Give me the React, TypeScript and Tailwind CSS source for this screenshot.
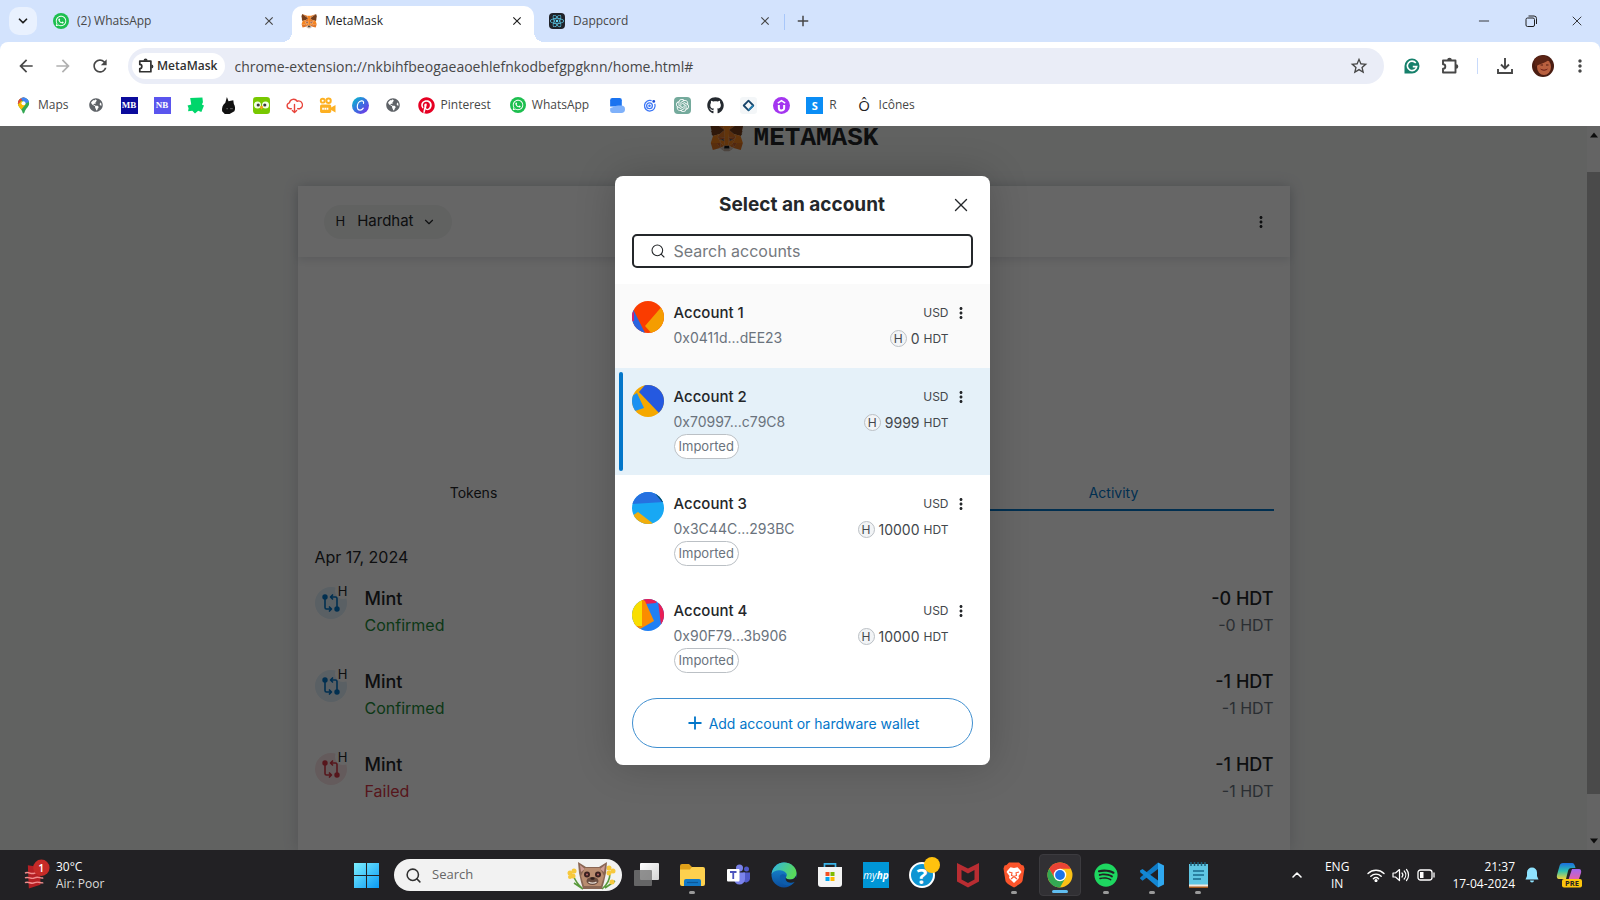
import React from "react";
import { FaGithub, FaGlobeAmericas, FaPinterest, FaReact, FaSpotify, FaWhatsapp } from "react-icons/fa";
import { SiOpenai } from "react-icons/si";
import {
  MdArrowBack,
  MdArrowForward,
  MdRefresh,
  MdStarBorder,
  MdMoreVert,
  MdClose,
  MdAdd,
} from "react-icons/md";
import { Search, X, ChevronDown, ChevronUp, Plus, Minus } from "lucide-react";

const EUCLID = "font-[Inter,'Liberation_Sans',sans-serif]";

/* ---------- drawings ---------- */

function Fox({ className }: { className: string }) {
  return (
    <svg viewBox="0 0 35 33" className={className} aria-hidden="true">
      <path fill="#E17726" d="M32.958 1l-13.134 9.718 2.442-5.727L32.958 1z" />
      <path fill="#E27625" d="M2.663 1l13.017 9.809-2.325-5.818L2.663 1zM28.23 23.533l-3.495 5.339 7.483 2.06 2.144-7.282-6.132-.117zM1.273 23.65l2.13 7.282 7.47-2.06-3.481-5.339-6.119.117zM10.47 14.515l-2.079 3.136 7.405.337-.247-7.97-5.079 4.497zM25.151 14.515l-5.157-4.587-.169 8.06 7.406-.337-2.08-3.136zM10.873 28.872l4.482-2.164-3.858-3.006-.624 5.17zM20.266 26.708l4.469 2.164-.611-5.17-3.858 3.006z" />
      <path fill="#D5BFB2" d="M24.735 28.872l-4.469-2.164.364 2.903-.039 1.231 4.144-1.97zM10.873 28.872l4.157 1.97-.026-1.231.351-2.903-4.482 2.164z" />
      <path fill="#CC6228" d="M10.873 28.872l.65-5.339-4.131.117 3.481 5.222zM24.098 23.533l.637 5.339 3.495-5.222-4.132-.117zM27.23 17.651l-7.405.337.688 3.796 1.091-2.293 2.637 1.205 2.989-3.045zM11.393 20.696l2.624-1.205 1.091 2.293.688-3.796-7.405-.337 3.002 3.045z" />
      <path fill="#233447" d="M15.108 21.784l-3.715-1.088 2.624-1.205 1.091 2.293zM20.513 21.784l1.091-2.293 2.637 1.205-3.728 1.088z" />
      <path fill="#E27525" d="M8.391 17.651l3.105 6.051-.104-3.006-3.001-3.045zM24.241 20.696l-.117 3.006 3.106-6.051-2.989 3.045zM15.796 17.988l-.688 3.796.871 4.471.195-5.895-.378-2.372zM19.825 17.988l-.364 2.359.182 5.908.87-4.471-.688-3.796z" />
      <path fill="#F5841F" d="M20.513 21.784l-.87 4.471.624.453 3.858-3.006.117-3.006-3.729 1.088zM11.393 20.696l.104 3.006 3.858 3.006.624-.453-.871-4.471-3.715-1.088z" />
      <path fill="#C0AC9D" d="M20.591 30.842l.039-1.231-.338-.285h-4.962l-.325.285.026 1.231-4.158-1.97 1.455 1.192 2.949 2.034h5.053l2.962-2.034 1.442-1.192-4.143 1.97z" />
      <path fill="#161616" d="M20.266 26.708l-.624-.453h-3.664l-.624.453-.351 2.903.325-.285h4.962l.338.285-.363-2.903z" />
      <path fill="#763E1A" d="M33.517 11.353l1.104-5.365L32.958 1l-12.692 9.37 4.885 4.145 6.898 2.008 1.52-1.775-.663-.48 1.052-.959-.806-.622 1.053-.804-.688-.53zM1 5.988l1.117 5.365-.714.531 1.065.804-.805.622 1.052.959-.663.48 1.52 1.775 6.897-2.008 4.885-4.145L2.663 1 1 5.988z" />
      <path fill="#F5841F" d="M32.049 16.523l-6.898-2.008 2.08 3.136-3.107 6.051 4.106-.052h6.132l-2.313-7.127zM10.47 14.515l-6.898 2.008-2.299 7.127h6.119l4.105.052-3.105-6.051 2.078-3.136zM19.825 17.988l.441-7.618 2-5.379h-8.911l2 5.379.441 7.618.169 2.398.013 5.869h3.664l.013-5.869.17-2.398z" />
    </svg>
  );
}

function WhatsAppMark() {
  return (
    <span className="flex size-4 shrink-0 items-center justify-center rounded-full bg-[#1dbf4f] text-white">
      <FaWhatsapp className="size-3" />
    </span>
  );
}

function MapsPin() {
  return (
    <svg viewBox="0 0 16 16" className="size-[17px]">
      <clipPath id="pin">
        <path d="M8 .5a5.3 5.3 0 0 0-5.3 5.3c0 3 2.6 4.6 3.7 6.9.6 1.2.8 2.8 1.6 2.8s1-1.600 1.600-2.800c1.100-2.300 3.700-3.900 3.700-6.900A5.300 5.300 0 0 0 8 .5z" />
      </clipPath>
      <g clipPath="url(#pin)">
        <rect width="16" height="16" fill="#34a853" />
        <path d="M0 0h9l-7 8z" fill="#ea4335" />
        <path d="M8 0h8v4L9 6z" fill="#4285f4" />
        <path d="M5 0l6 0-3 5z" fill="#4285f4" />
        <path d="M2 8l4-4.500 4 3.500-6 7z" fill="#fbbc04" />
      </g>
      <circle cx="8" cy="5.800" r="1.900" fill="#fff" />
    </svg>
  );
}

function LetterTile({ className, children }: { className: string; children: string }) {
  return (
    <span className={`flex size-[17px] shrink-0 items-center justify-center leading-none font-bold text-white ${className}`}>
      {children}
    </span>
  );
}

const mark = "size-[17px]";

const GreenMark = () => (
  <svg viewBox="0 0 16 16" className={mark}><path d="M3 1l11.500-.5.500 4.500-1 2 2 1-2.500 6-3-1-3 2.500L5 13l-4 .5.500-3L.5 8 4 7z" fill="#00d66b" /></svg>
);
const BlackCat = () => (
  <svg viewBox="0 0 16 16" className={mark}>
    <path d="M6.500 0l1.500 4L12.500 3l.5 3.500c1.500 2 1.500 5 .5 7L9 16H4.500L2 13.500c-.5-3 .5-6 3-8z" fill="#111" />
    <path d="M6 11h1.500M9.500 11H12" stroke="#999" strokeWidth="0.600" />
  </svg>
);
const Owl = () => (
  <svg viewBox="0 0 16 16" className={mark}>
    <rect width="16" height="16" rx="3" fill="#78c800" />
    <circle cx="4.200" cy="7.500" r="3.300" fill="#f4ffe6" /><circle cx="11.800" cy="7.500" r="3.300" fill="#f4ffe6" />
    <circle cx="4.900" cy="7.500" r="1.500" fill="#3c3c3c" /><circle cx="11.100" cy="7.500" r="1.500" fill="#3c3c3c" />
    <path d="M6.300 9.300L8 8l1.700 1.300L8 12z" fill="#f9a01b" />
  </svg>
);
const CloudDown = () => (
  <svg viewBox="0 0 16 16" className={mark} fill="none" stroke="#e8453c" strokeWidth="1.300" strokeLinecap="round" strokeLinejoin="round">
    <path d="M5 11H3.500a2.800 2.800 0 0 1-.3-5.500A4 4 0 0 1 10.500 4 3.600 3.600 0 0 1 13 11h-2" />
    <path d="M8 7v7.500M6 12.700l2 2 2-2" />
  </svg>
);
const Camera = () => (
  <svg viewBox="0 0 16 16" className={mark} fill="#fdb022">
    <circle cx="3.500" cy="3.500" r="2.700" /><circle cx="9" cy="3.500" r="3" />
    <rect x="1" y="7" width="10.500" height="8" rx="1.500" /><path d="M11 10l4.500-2.500v7L11 12z" />
    <circle cx="3.500" cy="3.500" r="1" fill="#fff" /><circle cx="9" cy="3.500" r="1.100" fill="#fff" />
    <path d="M3 11h6" stroke="#fff" strokeWidth="1.800" strokeDasharray="1.600 .5" />
  </svg>
);
const CanvaMark = () => (
  <svg viewBox="0 0 16 16" className={mark}>
    <defs><linearGradient id="cv" x1="0" y1="0" x2="1" y2="1"><stop offset="0" stopColor="#00c4cc" /><stop offset=".5" stopColor="#3a6fe0" /><stop offset="1" stopColor="#7d2ae8" /></linearGradient></defs>
    <circle cx="8" cy="8" r="8" fill="url(#cv)" />
    <path d="M10.800 6c.5-1.700-.5-2.600-1.900-2.400C6.500 4 5 6.700 5 9c0 2 1 3.400 2.600 3.400 1.400 0 2.400-.9 3-1.900" fill="none" stroke="#fff" strokeWidth="1.100" strokeLinecap="round" />
  </svg>
);
const BlueB = () => (
  <svg viewBox="0 0 16 16" className={mark}>
    <path d="M2 3a2 2 0 0 1 2-2h7a2 2 0 0 1 2 2v6H2z" fill="#1a73f0" /><path d="M2 11c0-1 1-.5 3-1.500 2-1.500 4-1.500 6-1.500h1.500a3.500 3.500 0 0 1 0 7H4a2 2 0 0 1-2-2z" fill="#7fb1fa" />
  </svg>
);
const Target = () => (
  <svg viewBox="0 0 16 16" className={mark} fill="none" stroke="#3b76f6" strokeWidth="1.200">
    <path d="M13 6.500A5 5 0 1 1 10 3.500" /><circle cx="8" cy="8.200" r="2.700" /><circle cx="8" cy="8.200" r=".6" fill="#3b76f6" /><circle cx="12" cy="4.200" r="1.300" fill="#1d4ed8" stroke="none" />
  </svg>
);
const Diamond = () => (
  <svg viewBox="0 0 16 16" className={mark}>
    <rect width="16" height="16" rx="3" fill="#f3f6f8" />
    <path d="M8 3.500L12.500 8 8 12.500 3.500 8z" fill="none" stroke="#17456b" strokeWidth="1.700" strokeLinejoin="round" /><path d="M8 12.500L12.500 8" stroke="#2a7fb0" strokeWidth="1.700" />
  </svg>
);
const UdemyMark = () => (
  <svg viewBox="0 0 16 16" className={mark}>
    <circle cx="8" cy="8" r="8" fill="#a435f0" />
    <path d="M5.500 7.500v2.800a2.500 2.500 0 0 0 5 0V7.500" fill="none" stroke="#fff" strokeWidth="1.900" /><path d="M4.500 5.700L8 3.500l3.500 2.200" fill="none" stroke="#fff" strokeWidth="1.400" />
  </svg>
);
const GrammarlyMark = () => (
  <svg viewBox="0 0 16 16" className="size-4">
    <path d="M8 .5A7.500 7.500 0 1 1 8 15.500H.5V8A7.500 7.500 0 0 1 8 .5z" fill="#15806b" />
    <path d="M11.800 5a4.700 4.700 0 1 0 .9 3.600H8.800" fill="none" stroke="#fff" strokeWidth="1.600" />
  </svg>
);
const DownloadIcon = () => (
  <svg viewBox="0 0 18 18" className="size-[18px]" fill="none" stroke="#474747" strokeWidth="1.900">
    <path d="M9 1v10M5 7.500l4 4 4-4M2 12v4h14v-4" />
  </svg>
);
const PuzzleIcon = ({ className }: { className: string }) => (
  <svg viewBox="0 0 18 18" className={className} fill="none" stroke="currentColor" strokeWidth="1.900" strokeLinejoin="round">
    <path d="M2 3.500h12.500v12H2v-3.700a2.300 2.300 0 0 0 0-4.600z" />
    <path d="M6.200 3a2.200 2.200 0 0 1 4.600 0zM15 7.200a2.200 2.200 0 0 1 0 4.600z" fill="currentColor" stroke="none" />
  </svg>
);
const AvatarPhoto = () => (
  <svg viewBox="0 0 22 22" className="size-[22px] rounded-full">
    <rect width="22" height="22" fill="#4a1d12" />
    <ellipse cx="12" cy="12" rx="7" ry="8" fill="#b9603f" />
    <path d="M3 12C6 9 12 9 18 4L12 0 2 3z" fill="#5b2415" />
    <path d="M8 13.500c3 1.500 5 1.500 8 0-2 3-6 3-8 0z" fill="#6d2018" />
    <path d="M8.500 10h2.500M14 10h2.500" stroke="#541d12" />
  </svg>
);

function Swap({ color }: { color: string }) {
  return (
    <svg viewBox="0 0 20 20" className="size-5" fill="none" stroke={color} strokeWidth="1.600" strokeLinejoin="round">
      <circle cx="4" cy="4" r="1.900" fill={color} /><circle cx="16" cy="16" r="1.900" fill={color} />
      <path d="M4 5v9.500c0 1 .4 1.500 1.500 1.500H10M8 13.500l2.500 2.500L8 18.500" />
      <path d="M16 15V5.500c0-1-.4-1.500-1.500-1.500H10M12 1.500L9.500 4 12 6.500" />
    </svg>
  );
}

/* ---------- accounts ---------- */

type Account = {
  name: string;
  address: string;
  balance: string;
  imported: boolean;
  row: string;
  art: React.ReactNode;
};

const accounts: Account[] = [
  {
    name: "Account 1", address: "0x0411d...dEE23", balance: "0", imported: false, row: "bg-[#fafafa]",
    art: <><rect width="32" height="32" fill="#fa3c00" /><path d="M0 6L13 32H0z" fill="#2a64e0" /><path d="M0 8l2 4v8H0z" fill="#d81e6f" /><path d="M32 3L13 25l8 9h11z" fill="#f59d00" /></>,
  },
  {
    name: "Account 2", address: "0x70997...c79C8", balance: "9999", imported: true, row: "bg-[#e5f1f9]",
    art: <><rect width="32" height="32" fill="#f5a800" /><path d="M0 11l5-3 7 15-12 4z" fill="#1b91f2" /><path d="M13 0L7 7l20 21 8-6V0z" fill="#2559e0" /></>,
  },
  {
    name: "Account 3", address: "0x3C44C...293BC", balance: "10000", imported: true, row: "bg-white",
    art: <><rect width="32" height="32" fill="#18a8f4" /><path d="M0 0h32v10L0 12z" fill="#2671e0" /><path d="M22 0l8 10h4V0z" fill="#015063" /><path d="M6 20l17 13H0V24z" fill="#f2ae0c" /></>,
  },
  {
    name: "Account 4", address: "0x90F79...3b906", balance: "10000", imported: true, row: "bg-white",
    art: <><rect width="32" height="32" fill="#2080f4" /><path d="M10 0h16l-2 4-11 1z" fill="#e91e55" /><path d="M26 2h8v24h-5z" fill="#e91e55" /><path d="M10 0l3 2 9 20L8 30H0z" fill="#fb8c00" /><path d="M0 0h10v27H0z" fill="#f9de00" /></>,
  },
];

function AccountRow({ account }: { account: Account }) {
  const active = account.name === "Account 2";
  return (
    <li className={`relative flex min-h-[84px] gap-2.5 py-4 pr-[21px] pl-[17px] ${account.row}`}>
      {active && <span className="absolute top-1 bottom-1 left-1 w-1 rounded-full bg-[#0376c9]" />}
      <svg viewBox="0 0 32 32" className="mt-px size-8 shrink-0 rounded-full">{account.art}</svg>
      <div className="flex min-w-0 flex-1 flex-col items-start">
        <button type="button" className="h-[25px] text-[15px] leading-[25px] font-medium text-[#24272a]">{account.name}</button>
        <span className="h-[25px] text-[14px] leading-[25px] text-[#6a737d]">{account.address}</span>
        {account.imported && (
          <span className="h-[25px] rounded-full border border-[#bbc0c5] bg-white px-1 text-[13px] leading-[23px] text-[#6a737d]">Imported</span>
        )}
      </div>
      <div className="flex flex-col items-end text-[#43474c]">
        <span className="text-[12px] leading-[26px]">USD</span>
        <span className="flex h-[25px] items-center gap-1">
          <span className="flex size-[17px] items-center justify-center rounded-full border border-[#bbc0c5] bg-[#f2f4f6] text-[12px] leading-none">H</span>
          <span className="text-[14px]">{account.balance}</span>
          <span className="text-[12px]">HDT</span>
        </span>
      </div>
      <button type="button" aria-label={`${account.name} options`} className="-ml-1.5 flex h-[26px] w-4 items-center justify-center text-[#24272a]">
        <MdMoreVert className="size-[18px] shrink-0" />
      </button>
    </li>
  );
}

/* ---------- browser ---------- */

function BrowserTab({ title, icon, active = false }: { title: string; icon: React.ReactNode; active?: boolean }) {
  return (
    <div className={`relative mr-1.5 flex h-9 w-[242px] items-center gap-2 pr-2.5 pb-[7px] pl-[9px] ${active ? "rounded-t-[10px] bg-white text-[#1f1f1f]" : "text-[#474747]"}`}>
      {active && (
        <>
          <span className="absolute bottom-0 -left-2.5 size-2.5 bg-[radial-gradient(circle_at_0_0,transparent_10px,white_10px)]" />
          <span className="absolute -right-2.5 bottom-0 size-2.5 bg-[radial-gradient(circle_at_100%_0,transparent_10px,white_10px)]" />
        </>
      )}
      {icon}
      <span className="flex-1 truncate text-[12px]">{title}</span>
      <button type="button" aria-label={`Close ${title}`}><MdClose className="size-3.5" /></button>
    </div>
  );
}

const bookmarks: { name: string; label?: string; icon: React.ReactNode }[] = [
  { name: "Maps", label: "Maps", icon: <MapsPin /> },
  { name: "Site", icon: <span className="flex size-[17px] items-center justify-center"><FaGlobeAmericas className="size-3.5 text-[#5f6368]" /></span> },
  { name: "MB", icon: <LetterTile className="bg-[#0b0b9c] font-['Liberation_Serif',serif] text-[9px]">MB</LetterTile> },
  { name: "NB", icon: <LetterTile className="bg-[#5a55ee] font-['Liberation_Serif',serif] text-[9px]">NB</LetterTile> },
  { name: "Notes", icon: <GreenMark /> },
  { name: "Cat", icon: <BlackCat /> },
  { name: "Duolingo", icon: <Owl /> },
  { name: "Download", icon: <CloudDown /> },
  { name: "Video", icon: <Camera /> },
  { name: "Canva", icon: <CanvaMark /> },
  { name: "Web", icon: <span className="flex size-[17px] items-center justify-center"><FaGlobeAmericas className="size-3.5 text-[#5f6368]" /></span> },
  { name: "Pinterest", label: "Pinterest", icon: <FaPinterest className="size-[17px] text-[#e60023]" /> },
  { name: "WhatsApp", label: "WhatsApp", icon: <WhatsAppMark /> },
  { name: "Blue", icon: <BlueB /> },
  { name: "Orbit", icon: <Target /> },
  { name: "ChatGPT", icon: <span className="flex size-[17px] items-center justify-center rounded-sm bg-[#74aa9c] text-white"><SiOpenai className="size-[13px]" /></span> },
  { name: "GitHub", icon: <FaGithub className="size-[17px] text-[#24292f]" /> },
  { name: "Diamond", icon: <Diamond /> },
  { name: "Udemy", icon: <UdemyMark /> },
  { name: "R", label: "R", icon: <LetterTile className="bg-[#0a8df5] text-[11px]">S</LetterTile> },
  { name: "Icônes", label: "Icônes", icon: <span className="flex size-[17px] items-center justify-center text-[15px] leading-none text-[#222]">Ô</span> },
];

function Browser() {
  return (
    <header className="bg-[#d3e3fd] text-[#474747]">
      <div className="flex h-[42px] items-end">
        <button type="button" aria-label="Search tabs" className="mb-[7px] ml-[9px] mr-[7px] flex size-7 items-center justify-center rounded-[10px] bg-[#e9f1fe] text-[#1f1f1f]">
          <ChevronDown className="size-3.5" strokeWidth={3} />
        </button>
        <BrowserTab title="(2) WhatsApp" icon={<WhatsAppMark />} />
        <BrowserTab title="MetaMask" active icon={<Fox className="size-4" />} />
        <BrowserTab title="Dappcord" icon={<span className="flex size-4 items-center justify-center rounded-sm bg-[#20232a] text-[#61dafb]"><FaReact className="size-3.5" /></span>} />
        <span className="mb-3 -ml-1 h-4 w-px bg-[#a8c7fa]" />
        <button type="button" aria-label="New tab" className="mb-3 ml-[9px]"><MdAdd className="size-[18px]" /></button>
        <div className="ml-auto flex h-[42px] items-center text-[#1f1f1f]">
          <button type="button" aria-label="Minimize" className="flex w-[47px] justify-center"><Minus className="size-4" strokeWidth={1.3} /></button>
          <button type="button" aria-label="Restore" className="flex w-[47px] justify-center">
            <svg viewBox="0 0 12 12" className="size-3" fill="none" stroke="#1f1f1f"><rect x="1" y="3" width="8.500" height="8.500" rx="1.500" /><path d="M3.500 1H9a2.500 2.500 0 0 1 2.500 2.500V9" /></svg>
          </button>
          <button type="button" aria-label="Close window" className="flex w-[46px] justify-center"><X className="size-4" strokeWidth={1.3} /></button>
        </div>
      </div>

      <div className="rounded-t-lg bg-white">
        <div className="flex h-12 items-center pr-2.5 pl-4">
          <button type="button" aria-label="Back" className="mr-[17px]"><MdArrowBack className="size-5" /></button>
          <button type="button" aria-label="Forward" className="mr-[17px] text-[#b0b0b0]"><MdArrowForward className="size-5" /></button>
          <button type="button" aria-label="Reload" className="mr-[18px]"><MdRefresh className="size-5" /></button>
          <div className="flex h-9 min-w-0 flex-1 items-center rounded-full bg-[#eaedf7] pr-[15px] pl-1">
            <button type="button" className="mr-[9px] flex h-[26px] items-center gap-[3px] rounded-full bg-white pr-2 pl-1.5 text-[12px] font-semibold text-[#303030]">
              <PuzzleIcon className="size-4" />
              MetaMask
            </button>
            <input type="text" aria-label="Address" readOnly value="chrome-extension://nkbihfbeogaeaoehlefnkodbefgpgknn/home.html#" className="min-w-0 flex-1 bg-transparent text-[14px] text-[#474747] outline-none" />
            <button type="button" aria-label="Bookmark this tab"><MdStarBorder className="size-5" /></button>
          </div>
          <div className="ml-5 flex items-center">
            <button type="button" aria-label="Grammarly" className="mr-[21px]"><GrammarlyMark /></button>
            <button type="button" aria-label="Extensions" className="mr-[18px]"><PuzzleIcon className="size-[18px]" /></button>
            <span className="mr-[18px] h-4 w-px bg-[#c8dafb]" />
            <button type="button" aria-label="Downloads" className="mr-[18px]"><DownloadIcon /></button>
            <button type="button" aria-label="Profile" className="mr-4"><AvatarPhoto /></button>
            <button type="button" aria-label="Menu"><MdMoreVert className="size-5" /></button>
          </div>
        </div>
        <nav aria-label="Bookmarks" className="flex h-9 items-center gap-4 pb-1.5 pl-[15px] text-[12px]">
          {bookmarks.map((b) => (
            <a key={b.name} href="#" aria-label={b.name} className={`flex h-5 shrink-0 items-center gap-1.5 ${b.label ? "pr-[3px]" : ""}`}>
              {b.icon}
              {b.label && <span>{b.label}</span>}
            </a>
          ))}
        </nav>
      </div>
    </header>
  );
}

/* ---------- wallet page ---------- */

const activity = [
  { status: "Confirmed", amount: "-0 HDT", ok: true },
  { status: "Confirmed", amount: "-1 HDT", ok: true },
  { status: "Failed", amount: "-1 HDT", ok: false },
];

function Wallet() {
  return (
    <div className={`flex min-h-0 flex-1 bg-[#f2f4f3] text-[#24272a] ${EUCLID}`}>
      <div className="flex flex-1 flex-col items-center">
        <div className="-mt-1.5 flex h-[66px] items-start gap-2.5">
          <Fox className="h-8 w-[35px]" />
          <span className="mt-2 font-['Liberation_Mono',monospace] text-[26px] leading-5 font-bold text-[#24272a]">METAMASK</span>
        </div>
        <div className="w-[62vw] flex-1 bg-white shadow-[0_0_14px_rgba(60,70,90,0.2)]">
          <div className="flex h-[71px] items-center justify-between pr-5 pl-[26px] shadow-[0_3px_8px_rgba(60,70,90,0.14)]">
            <button type="button" className="flex h-[34px] items-center rounded-full bg-[#f2f4f3] pr-4 pl-3 text-[15px]">
              <span className="mr-3 text-[13px]">H</span>
              Hardhat
              <ChevronDown className="ml-2 size-3.5" />
            </button>
            <button type="button" aria-label="Account options"><MdMoreVert className="size-[18px]" /></button>
          </div>
          <div className="grid grid-cols-3 px-4 pt-[210px] text-[14px]">
            <button type="button" className="h-11 pt-1.5">Tokens</button>
            <button type="button" className="col-start-3 h-11 border-b-2 border-[#0376c9] pt-2 text-[#0376c9]">Activity</button>
          </div>
          <div className="pt-[34px] pr-4 pl-[17px]">
            <h2 className="text-[16px] leading-6">Apr 17, 2024</h2>
            <ul className="pt-[18px]">
              {activity.map((a, i) => (
                <li key={i} className="flex h-[83px] items-start">
                  <span className={`relative mr-[18px] flex size-8 items-center justify-center rounded-full ${a.ok ? "bg-[#e0f0fa]" : "bg-[#fae3e5]"}`}>
                    <Swap color={a.ok ? "#0376c9" : "#d73847"} />
                    <span className="absolute -top-1 -right-1 flex size-4 items-center justify-center rounded-full bg-white text-[13px] leading-none">H</span>
                  </span>
                  <div className="-mt-px flex-1">
                    <div className="text-[18px] leading-[26px] font-medium">Mint</div>
                    <div className={`text-[16px] leading-[26px] ${a.ok ? "text-[#1e8c3a]" : "text-[#d73847]"}`}>{a.status}</div>
                  </div>
                  <div className="-mt-px text-right">
                    <div className="text-[18px] leading-[26px] font-medium">{a.amount}</div>
                    <div className="text-[16px] leading-[26px] text-[#6a737d]">{a.amount}</div>
                  </div>
                </li>
              ))}
            </ul>
          </div>
        </div>
      </div>
      <div className="flex w-[13px] flex-col items-center justify-between bg-[#fafafa] py-1.5" aria-hidden="true">
        <svg viewBox="0 0 8 6" className="w-2"><path d="M0 5.500h8L4 .5z" fill="#222" /></svg>
        <div className="mt-[34px] mb-11 w-full flex-1 bg-[#b8b8b8]" />
        <svg viewBox="0 0 8 6" className="w-2"><path d="M0 .5h8L4 5.500z" fill="#222" /></svg>
      </div>
    </div>
  );
}

function AccountDialog() {
  return (
    <div className={`absolute inset-0 flex items-start justify-center bg-black/60 pt-[50px] pl-1 ${EUCLID}`}>
      <section role="dialog" aria-modal="true" aria-labelledby="dialog-title" className="w-[375px] rounded-lg bg-white shadow-[0_0_40px_rgba(0,0,0,0.2)]">
        <div className="relative flex h-[58px] items-center justify-center">
          <h1 id="dialog-title" className="text-[19px] leading-6 font-bold text-[#24272a]">Select an account</h1>
          <button type="button" aria-label="Close" className="absolute right-[18px] text-[#24272a]"><X className="size-[22px]" strokeWidth={1.5} /></button>
        </div>
        <label className="mx-[17px] flex h-[34px] items-center gap-2 rounded-[5px] border-2 border-[#24272a] pl-4 text-[#24272a]">
          <Search className="size-4 shrink-0" strokeWidth={1.6} />
          <input type="text" aria-label="Search accounts" placeholder="Search accounts" className="min-w-0 flex-1 bg-transparent text-[16px] outline-none placeholder:text-[#75797e]" />
        </label>
        <ul className="mt-4">
          {accounts.map((a) => <AccountRow key={a.name} account={a} />)}
        </ul>
        <div className="px-[17px] pt-[9px] pb-[17px]">
          <button type="button" className="flex h-[50px] w-full items-center justify-center gap-1 rounded-full border border-[#3f8fd0] text-[14px] text-[#0376c9]">
            <Plus className="size-5" strokeWidth={2.2} />
            Add account or hardware wallet
          </button>
        </div>
      </section>
    </div>
  );
}

/* ---------- taskbar ---------- */

const ic = "size-[26px]";

const TaskView = () => (
  <svg viewBox="0 0 26 26" className={ic}><defs><linearGradient id="tv" x1="0" y1="0" x2="1" y2="1"><stop offset="0" stopColor="#fff" /><stop offset="1" stopColor="#d5d5d5" /></linearGradient></defs><rect x="7" y="1" width="19" height="17" rx="1" fill="url(#tv)" /><rect x="1" y="8" width="18" height="16" rx="1" fill="#777" fillOpacity=".8" /></svg>
);
const Folder = () => (
  <svg viewBox="0 0 26 26" className={ic}><path d="M1 4a2 2 0 0 1 2-2h7l3 3h10v8H1z" fill="#e0a019" /><path d="M1 7.500h10L13 5h11a2 2 0 0 1 2 2v15a2 2 0 0 1-2 2H3a2 2 0 0 1-2-2z" fill="#fdd04e" /><path d="M5 24v-5a2 2 0 0 1 2-2h13a2 2 0 0 1 2 2v5z" fill="#1278c6" /><path d="M8 20.500h11" stroke="#0b5798" strokeWidth="1.200" /></svg>
);
const Teams = () => (
  <svg viewBox="0 0 26 26" className={ic}><circle cx="14.500" cy="6" r="3.500" fill="#7b83eb" /><circle cx="21.500" cy="7" r="2.500" fill="#5059c9" /><path d="M18 10.500h7v6.500a4 4 0 0 1-7 2z" fill="#5059c9" /><path d="M9 10.500h11v6.500a5.500 5.500 0 0 1-11 0z" fill="#7b83eb" /><rect x="2" y="7" width="12.500" height="12.500" rx="1" fill="#fff" /><path d="M5 10h6.500M8.250 10v7" stroke="#4b53bc" strokeWidth="1.800" /></svg>
);
const Edge = () => (
  <svg viewBox="0 0 26 26" className={ic}>
    <defs><linearGradient id="eg" x1="0" y1="0" x2="1" y2=".4"><stop offset="0" stopColor="#31b3e8" /><stop offset="1" stopColor="#58d95a" /></linearGradient><linearGradient id="eb" x1="0" y1="0" x2="0" y2="1"><stop offset="0" stopColor="#1a91d8" /><stop offset="1" stopColor="#0a4c9b" /></linearGradient></defs>
    <circle cx="13" cy="13" r="12.500" fill="url(#eb)" />
    <path d="M.6 12C1.500 5 7 .5 13 .5c7 0 12.500 5 12.500 10.500 0 4-3 6.500-6.500 6.500-3 0-4.500-1-4-2.500 1-1 1-2 .5-3.200C14 8 4 6 .6 12z" fill="url(#eg)" />
    <path d="M9 14c-1 5 3 10 9.500 9.500 2.500-.5 4.500-2.500 5.500-4.500-6 2.500-11 0-9-4.200C16 12 10 11 9 14z" fill="#0d5cab" />
    <path d="M15 15c-.5 1.500 1 2.500 4 2.500s5-1 5.800-3.500L26 19l-2.500 1c-6 2-10-1-8.500-5z" fill="#222124" />
  </svg>
);
const Store = () => (
  <svg viewBox="0 0 26 26" className={ic}><path d="M7.500 6V1.800h11V6" fill="none" stroke="#3bb4e8" strokeWidth="1.700" /><path d="M1 5h24v17a3 3 0 0 1-3 3H4a3 3 0 0 1-3-3z" fill="#f4f4f4" /><path d="M8.500 10h4v4h-4z" fill="#f25022" /><path d="M13.500 10h4v4h-4z" fill="#7fba00" /><path d="M8.500 15h4v4h-4z" fill="#00a4ef" /><path d="M13.500 15h4v4h-4z" fill="#ffb900" /></svg>
);
const MyHp = () => (
  <span className="flex size-[26px] items-center justify-center bg-[#0096d6] text-[10px] text-white italic">my<b>hp</b></span>
);
const Help = () => (
  <span className="relative flex size-[26px] items-center justify-center rounded-full border-2 border-white bg-[#0e95d3] text-[22px] leading-none font-bold text-white">
    ?<span className="absolute -top-[7px] -right-[7px] size-4 rounded-full bg-[#ffc20e]" />
  </span>
);
const McAfee = () => (
  <svg viewBox="0 0 26 26" className={ic}><path d="M2 1l11 5.500L24 1v18.500L13 25.500 2 19.500zM6.500 8v9.500l6.500 3.500 6.500-3.500V8L13 11.500z" fill="#b92d32" fillRule="evenodd" /></svg>
);
const Chrome = () => (
  <svg viewBox="0 0 26 26" className={ic}>
    <circle cx="13" cy="13" r="12.500" fill="#fbc116" /><path d="M2.170 6.750A12.500 12.500 0 0 1 23.830 6.750H13L7.600 16.100z" fill="#ea4335" /><path d="M2.170 6.750A12.500 12.500 0 0 0 13 25.500L18.400 16.100 7.600 16.100z" fill="#34a853" />
    <circle cx="13" cy="13" r="6.250" fill="#fff" /><circle cx="13" cy="13" r="4.900" fill="#1a73e8" />
  </svg>
);
const Brave = () => (
  <svg viewBox="0 0 26 26" className={ic}>
    <path d="M8 .5h10l2.500 2.500 2 .5 1 3-2 12.500c-1 2.500-5 4.500-8.500 6.500-3.500-2-7.500-4-8.500-6.500L2.500 6.500l1-3 2-.5z" fill="#fb542b" />
    <path d="M13 6l3.500-.8 3 3.300 1 1.500-3 4 .5 2-5 5-5-5 .5-2-3-4 1-1.500 3-3.300z" fill="#fff" />
    <path d="M8 10l3 .8L10.500 13.500 13 14.500l2.500-1-.5-2.700 3-.8M10 17l3-2.500 3 2.500" fill="none" stroke="#fb542b" strokeWidth="1.100" />
  </svg>
);
const VsCode = () => (
  <svg viewBox="0 0 26 26" className={ic}>
    <path d="M1 16.500l2.500 2.300L19 7V.5L1.200 15.500z" fill="#0f7bc6" /><path d="M1 8.500L3.500 7 19 18.500v7L1.200 10.300z" fill="#1387d4" /><path d="M19 .5l6 3v19l-6 3z" fill="#2fa8f0" />
  </svg>
);
const Notepad = () => (
  <svg viewBox="0 0 26 26" className={ic}><path d="M4 2h19v21H4z" fill="#5fc6e3" /><path d="M4 22.500h19V25H4z" fill="#f3e9df" /><path d="M4 24.500h19V26H4z" fill="#a4591c" /><path d="M8 9h11M8 13h11M8 17h8" stroke="#1a6b8d" strokeWidth="1.400" /><path d="M6 0v4M9.500 0v4M13 0v4M16.500 0v4M20 0v4" stroke="#1d5f79" strokeWidth="1.500" /></svg>
);
const Critter = () => (
  <svg viewBox="0 0 52 32" className="h-8 w-[52px]">
    <path d="M7 16c2 5 4 9 9 13M44 14c0 6-3 12-8 16M8 24l9 6M49 22l-10 7" stroke="#5a9a3c" strokeWidth="1.600" fill="none" />
    <g fill="#f7c83c"><circle cx="4" cy="14" r="2.500" /><circle cx="8" cy="12" r="2.500" /><circle cx="7" cy="17" r="2.500" /><circle cx="4" cy="18" r="2" /><circle cx="43" cy="9" r="2.500" /><circle cx="47" cy="12" r="2.500" /><circle cx="43" cy="14" r="2.500" /><circle cx="46" cy="23" r="2.500" /></g>
    <path d="M12 3l8 5h13l8-5-1 11-2 9-2 7H17l-2-7-2-9z" fill="#8a6654" /><path d="M14 6l5 4-4 3zM39 6l-5 4 4 3z" fill="#cf9c95" />
    <path d="M19 9h15l4 8-3 10H18l-3-10z" fill="#b98c70" />
    <circle cx="21" cy="15.500" r="3" fill="#3a2020" /><circle cx="32" cy="15.500" r="3" fill="#3a2020" /><circle cx="21" cy="15.500" r="1" fill="#b66" /><circle cx="32" cy="15.500" r="1" fill="#b66" />
    <ellipse cx="26.500" cy="22" rx="6" ry="4" fill="#6a4c40" /><path d="M22.500 23c2 1.500 6 1.500 8 0" fill="none" stroke="#e8dcd4" strokeWidth="1.200" /><ellipse cx="26.500" cy="19.500" rx="2.200" ry="1.200" fill="#2d1c1a" />
  </svg>
);

const apps: { name: string; icon: React.ReactNode; running?: boolean; active?: boolean }[] = [
  { name: "Task view", icon: <TaskView /> },
  { name: "File Explorer", icon: <Folder />, running: true },
  { name: "Teams", icon: <Teams /> },
  { name: "Edge", icon: <Edge /> },
  { name: "Store", icon: <Store /> },
  { name: "myHP", icon: <MyHp /> },
  { name: "Help", icon: <Help /> },
  { name: "McAfee", icon: <McAfee /> },
  { name: "Brave", icon: <Brave />, running: true },
  { name: "Chrome", icon: <Chrome />, running: true, active: true },
  { name: "Spotify", icon: <FaSpotify className="size-6 text-[#1ed760]" />, running: true },
  { name: "Visual Studio Code", icon: <VsCode />, running: true },
  { name: "Notepad", icon: <Notepad />, running: true },
];

function Taskbar() {
  return (
    <footer className="flex h-[50px] items-center bg-[#222124] text-[12px] text-white">
      <button type="button" className="flex w-[346px] shrink-0 items-center gap-[5px] pl-6 text-left leading-[17px]">
        <svg viewBox="0 0 28 32" className="h-8 w-[27px]">
          <path d="M4 6l13 2v18L5 30z" fill="#b51f24" /><path d="M1 14c4-2 6 2 10 0s6 1 9 0M1 19c4-2 6 2 10 0s6 1 9 0M1 24c4-2 6 2 10 0s6 1 9 0" fill="none" stroke="#f08c8c" strokeWidth="1.500" />
          <circle cx="18" cy="8.500" r="8.500" fill="#c62b27" /><text x="18" y="12.500" textAnchor="middle" fontSize="11" fontWeight="600" fill="#fff">1</text>
        </svg>
        <span className="flex flex-col"><span>30°C</span><span className="text-[#dcdcdc]">Air: Poor</span></span>
      </button>
      <button type="button" aria-label="Start" className="mr-[15px] ml-2">
        <svg viewBox="0 0 24 24" className="size-[25px]"><defs><linearGradient id="win" gradientUnits="userSpaceOnUse" x1="0" y1="0" x2="24" y2="24"><stop offset="0" stopColor="#7df0ff" /><stop offset="1" stopColor="#0a9af5" /></linearGradient></defs><path d="M0 0h11.500v11.500H0zM12.500 0H24v11.500H12.500zM0 12.500h11.500V24H0zM12.500 12.500H24V24H12.500z" fill="url(#win)" /></svg>
      </button>
      <label className="flex h-8 w-[228px] shrink-0 items-center gap-2.5 rounded-full bg-[#f2f2f2] pr-1 pl-[11px] text-[#303030]">
        <Search className="size-[17px] shrink-0" strokeWidth={2.200} />
        <input type="text" aria-label="Search" placeholder="Search" className="min-w-0 flex-1 bg-transparent text-[13px] outline-none placeholder:text-[#666]" />
        <Critter />
      </label>
      <nav aria-label="Apps" className="flex gap-1 pl-[3px]">
        {apps.map((a) => (
          <button key={a.name} type="button" aria-label={a.name} className={`relative flex h-[42px] w-[42px] items-center justify-center rounded ${a.active ? "border border-[#3c3b3f] bg-[#313034]" : ""}`}>
            {a.icon}
            {a.running && <span className={`absolute bottom-0.5 h-[3px] rounded-full ${a.active ? "w-4 bg-[#60bdf0]" : "w-1.5 bg-[#9a9a9a]"}`} />}
          </button>
        ))}
      </nav>
      <div className="ml-auto flex items-center pr-[18px]">
        <button type="button" aria-label="Show hidden icons"><ChevronUp className="size-4" strokeWidth={2.400} /></button>
        <span className="ml-5 text-center leading-[17px]">ENG<br />IN</span>
        <span className="ml-[18px] flex items-center gap-[7px]">
          <svg viewBox="0 0 18 14" className="h-3.5 w-[18px]" fill="none" stroke="#fff" strokeWidth="1.400" strokeLinecap="round"><path d="M1 5.500a11.500 11.500 0 0 1 16 0M3.800 8.200a7.500 7.500 0 0 1 10.400 0M6.400 10.700a4 4 0 0 1 5.200 0" /><circle cx="9" cy="12.600" r=".9" fill="#fff" /></svg>
          <svg viewBox="0 0 18 14" className="h-3.5 w-[18px]" fill="none" stroke="#fff" strokeWidth="1.200" strokeLinejoin="round" strokeLinecap="round"><path d="M1 5v4h2.500L7.500 12.500v-11L3.500 5zM10 5a3 3 0 0 1 0 4M12.200 3a6 6 0 0 1 0 8M14.500 1.500a8.500 8.500 0 0 1 0 11" /></svg>
          <svg viewBox="0 0 18 12" className="h-3 w-[18px]" fill="none" stroke="#fff" strokeWidth="1.300"><rect x="1" y="1" width="14" height="10" rx="2.500" /><path d="M17 4v4" strokeLinecap="round" /><rect x="3" y="3" width="3.500" height="6" fill="#fff" stroke="none" /></svg>
        </span>
        <span className="ml-[17px] text-right leading-[17px]">21:37<br />17-04-2024</span>
        <svg viewBox="0 0 14 16" className="ml-2.5 h-4 w-3.5"><path d="M7 .5A5 5 0 0 0 2 5.500V9L.5 12.500h13L12 9V5.500a5 5 0 0 0-5-5zM5 13.500a2 2 0 0 0 4 0z" fill="#8fe3ff" /></svg>
        <svg viewBox="0 0 26 26" className="ml-[17px] size-[26px]">
          <defs><linearGradient id="ca" x1="0" y1="0" x2="0" y2="1"><stop offset="0" stopColor="#1a6fe0" /><stop offset=".5" stopColor="#2fc1b0" /><stop offset="1" stopColor="#f1d33a" /></linearGradient><linearGradient id="cb" x1="0" y1="0" x2="0" y2="1"><stop offset="0" stopColor="#a066f0" /><stop offset="1" stopColor="#f0609a" /></linearGradient></defs>
          <path d="M7 1h9c2 0 3 2 3.500 5h-4c-2 0-3 1-3.500 3l-2 8H3c-2 0-2.500-2-2-4l2.500-9C4 2 5 1 7 1z" fill="url(#ca)" /><path d="M16 7h7c2 0 2.500 2 2 4l-2 6c-.5 1-1.500 2-3 2h-8z" fill="url(#cb)" />
          <rect x="6" y="17" width="20" height="8.500" rx="2" fill="#fdc50c" /><text x="16" y="24" textAnchor="middle" fontSize="7.500" fontWeight="700" fill="#222">PRE</text>
        </svg>
      </div>
    </footer>
  );
}

export default function App() {
  return (
    <div className="flex min-h-screen flex-col font-['Open_Sans','Noto_Sans',sans-serif]">
      <Browser />
      <main className="relative flex flex-1 flex-col overflow-hidden">
        <Wallet />
        <AccountDialog />
      </main>
      <Taskbar />
    </div>
  );
}
